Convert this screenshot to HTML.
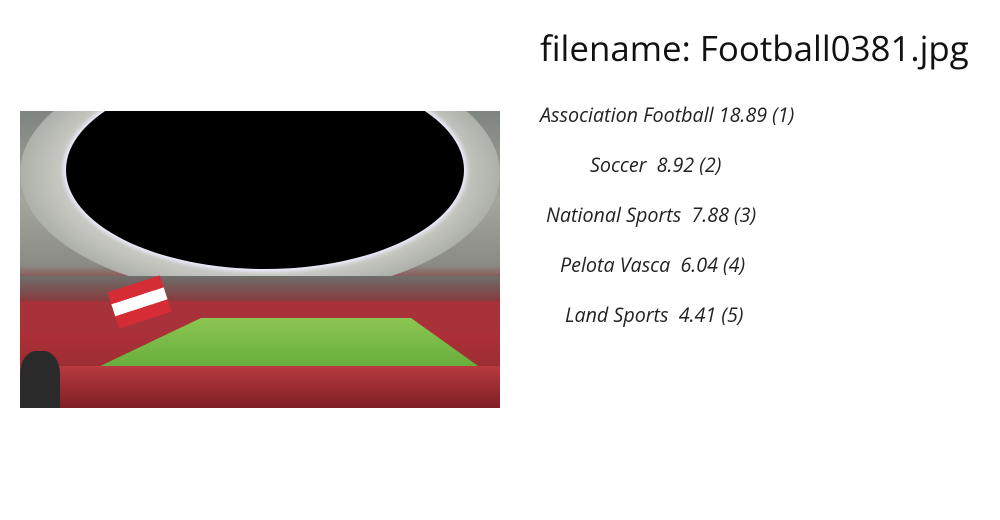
<!DOCTYPE html>
<html><head><meta charset="utf-8"><style>
body{margin:0;width:1000px;height:520px;background:#fff;position:relative;overflow:hidden;font-family:"Open Sans","DejaVu Sans","Liberation Sans",sans-serif;}
.t{position:absolute;left:540px;top:25px;font-size:34.9px;color:#111;white-space:nowrap}
.l{position:absolute;font-size:19.7px;font-style:italic;color:#222;white-space:nowrap}
.img{position:absolute;left:20px;top:111px;width:480px;height:297px;overflow:hidden;
background:linear-gradient(#7e847f 0%,#a4a69e 30%,#8a8b84 52%,#8b3a3c 58%,#b8323a 66%,#8a2a2e 100%);}
</style></head><body>
<div class="img">
<div style="position:absolute;left:0px;top:-60px;width:480px;height:245px;border-radius:50%;background:radial-gradient(ellipse,#c4c6bf 60%,#6f756f 100%)"></div>
<div style="position:absolute;left:46px;top:-40px;width:398px;height:198px;border-radius:50%;background:#000;box-shadow:0 0 5px 3px #eef"></div>
<div style="position:absolute;left:0;top:165px;width:480px;height:30px;background:linear-gradient(#6d6f6c,#8c2f33)"></div>
<div style="position:absolute;left:0;top:190px;width:480px;height:30px;background:#a8323a"></div>
<div style="position:absolute;left:55px;top:207px;width:420px;height:60px;background:linear-gradient(#8cc653,#5fa836);clip-path:polygon(30% 0,80% 0,100% 100%,0 100%)"></div>
<div style="position:absolute;left:0;top:255px;width:480px;height:42px;background:linear-gradient(#b93a40,#7e1f24)"></div>
<div style="position:absolute;left:92px;top:172px;width:55px;height:38px;background:linear-gradient(#d52c36 33%,#fff 33%,#fff 66%,#d52c36 66%);transform:rotate(-18deg)"></div>
<div style="position:absolute;left:0;top:240px;width:40px;height:57px;background:#2a2a2a;border-radius:40% 40% 0 0"></div>
</div>
<div class="t">filename: Football0381.jpg</div>
<div class="l" style="left:540px;top:101px">Association Football 18.89 (1)</div>
<div class="l" style="left:590px;top:151px">Soccer&nbsp; 8.92 (2)</div>
<div class="l" style="left:546px;top:201px">National Sports&nbsp; 7.88 (3)</div>
<div class="l" style="left:560px;top:251px">Pelota Vasca&nbsp; 6.04 (4)</div>
<div class="l" style="left:565px;top:301px">Land Sports&nbsp; 4.41 (5)</div>
</body></html>
